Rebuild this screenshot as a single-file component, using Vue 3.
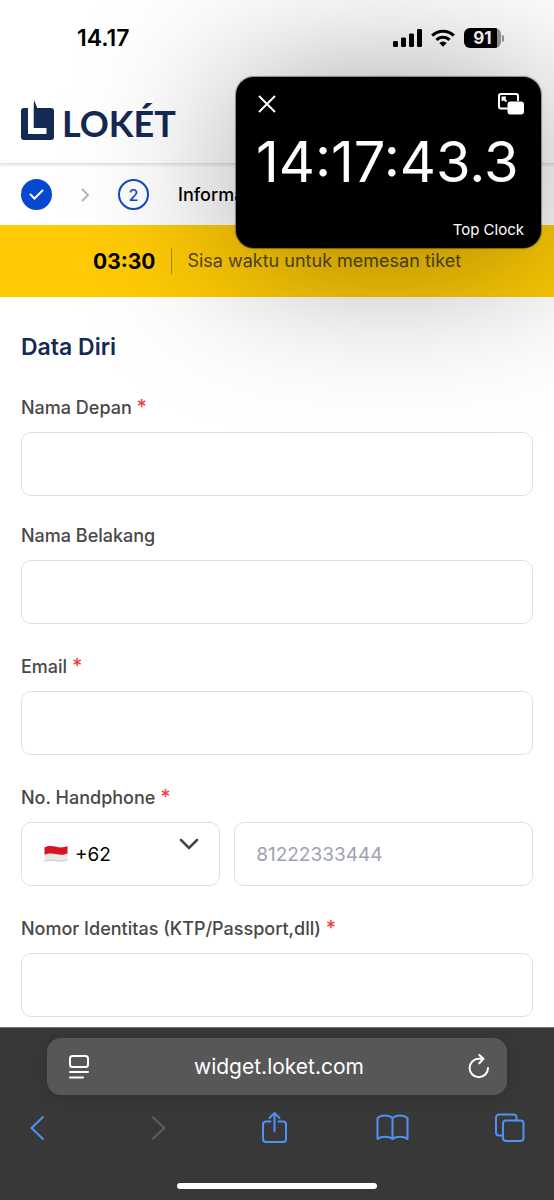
<script setup>
import { reactive } from 'vue'

const form = reactive({
  firstName: '',
  lastName: '',
  email: '',
  dialCode: '+62',
  phone: '',
  identity: ''
})
</script>

<template>
  <div class="screen">
    <div class="status">
      <time class="status-time">14.17</time>
      <div class="status-icons">
        <svg width="29" height="18" viewBox="0 0 29 18" aria-hidden="true">
          <rect x="0" y="12" width="5" height="6" rx="1.3" />
          <rect x="8" y="8.500" width="5" height="9.500" rx="1.300" />
          <rect x="16" y="4.500" width="5" height="13.500" rx="1.300" />
          <rect x="24" y="0" width="5" height="18" rx="1.300" />
        </svg>
        <svg width="26" height="18" viewBox="0 0 26 18" aria-hidden="true">
          <path d="M2.200 6.600a15.300 15.300 0 0 1 21.600 0" class="wave" />
          <path d="M6.500 11a9.200 9.200 0 0 1 13 0" class="wave" />
          <path d="M13 17.800l-3.700-3.700a5.300 5.300 0 0 1 7.400 0z" />
        </svg>
        <div class="battery"><span class="battery-level">91</span><i class="battery-cap"></i></div>
      </div>
    </div>

    <header class="brand">
      <a href="#" class="logo">
        <svg width="33" height="41" viewBox="0 0 33 41" aria-hidden="true">
          <path d="M3 8h4v26h18.500v-6H12.700V8L13 0l3.300 8H30a3 3 0 0 1 3 3v26a3 3 0 0 1-3 3H3a3 3 0 0 1-3-3V11a3 3 0 0 1 3-3z" />
        </svg>
        <span>LOKÉT</span>
      </a>
    </header>

    <nav class="steps" aria-label="Langkah">
      <span class="step done">
        <svg width="15" height="11" viewBox="0 0 15 11"><path d="M1.500 5.500l4 4 8-8" /></svg>
      </span>
      <svg class="step-arrow" width="8" height="14" viewBox="0 0 8 14"><path d="M1 1l6 6-6 6" /></svg>
      <span class="step current">2</span>
      <span class="step-name">Informasi</span>
    </nav>

    <div class="countdown">
      <strong>03:30</strong>
      <span class="countdown-text">Sisa waktu untuk memesan tiket</span>
    </div>

    <form class="form" @submit.prevent>
      <h1>Data Diri</h1>
      <div class="field required">
        <label for="first-name">Nama Depan <b>*</b></label>
        <input id="first-name" v-model="form.firstName" type="text" />
      </div>
      <div class="field">
        <label for="last-name">Nama Belakang</label>
        <input id="last-name" v-model="form.lastName" type="text" />
      </div>
      <div class="field required">
        <label for="email">Email <b>*</b></label>
        <input id="email" v-model="form.email" type="email" />
      </div>
      <div class="field required">
        <label for="phone">No. Handphone <b>*</b></label>
        <div class="phone">
          <div class="dial">
            <select v-model="form.dialCode" aria-label="Kode negara">
              <option value="+62">+62</option>
            </select>
            <svg class="flag" width="24" height="18" viewBox="0 0 24 18" aria-hidden="true">
              <path d="M0.500 2.500C4.500 0.500 8 1 12 1.800s7.500 1 11.500-.8V15c-4 1.800-7.500 1.500-11.500.8S4.500 14.800.500 16.800z" fill="#e9e9e9" />
              <path d="M0.500 2.500C4.500 0.500 8 1 12 1.800s7.500 1 11.500-.8v7.400c-4 1.700-7.500 1.400-11.500.7S4.500 8 .500 9.800z" fill="#d8151c" />
              <path d="M0.500 16.500c4-2 7.500-1.600 11.500-.9s7.500 1 11.500-.8" fill="none" stroke="#bcbcbc" stroke-width=".8" />
            </svg>
            <svg class="dial-arrow" width="20" height="12" viewBox="0 0 20 12" aria-hidden="true">
              <path d="M2 2l8 8 8-8" />
            </svg>
          </div>
          <input id="phone" v-model="form.phone" type="tel" placeholder="81222333444" />
        </div>
      </div>
      <div class="field required">
        <label for="identity">Nomor Identitas (KTP/Passport,dll) <b>*</b></label>
        <input id="identity" v-model="form.identity" type="text" />
      </div>
    </form>

    <footer class="browser">
      <div class="address">
        <button type="button" aria-label="Menu halaman">
          <svg width="22" height="26" viewBox="0 0 22 26">
            <rect x="2" y="2" width="18" height="11" rx="2.500" />
            <path d="M2 18h18M2 23.500h13" />
          </svg>
        </button>
        <span class="url">widget.loket.com</span>
        <button type="button" aria-label="Muat ulang">
          <svg width="22" height="26" viewBox="0 0 22 26">
            <path d="M20 14a9.200 9.200 0 1 1-9.200-9.200h4.700M11.300 1l4.200 3.800-4.200 4.400" />
          </svg>
        </button>
      </div>
      <div class="toolbar">
        <button type="button" aria-label="Kembali">
          <svg width="34" height="34" viewBox="0 0 34 34"><path d="M23 6L11.500 17 23 28" /></svg>
        </button>
        <button type="button" aria-label="Maju" disabled>
          <svg width="34" height="34" viewBox="0 0 34 34"><path d="M14.500 6L26.500 17 14.500 28" /></svg>
        </button>
        <button type="button" aria-label="Bagikan">
          <svg width="34" height="34" viewBox="0 0 34 34">
            <path d="M13.500 10.500H9A3 3 0 0 0 6 13.500V28a3 3 0 0 0 3 3h17a3 3 0 0 0 3-3V13.500a3 3 0 0 0-3-3h-4.500M17.500 20.500V2M12.500 7l5-5 5 5" />
          </svg>
        </button>
        <button type="button" aria-label="Bookmark">
          <svg width="34" height="34" viewBox="0 0 34 34">
            <path d="M17.500 7C14 3.500 6 3.500 2.500 7v21c3.500-3 11.500-3 15 0 3.500-3 11.500-3 15 0V7C29 3.500 21 3.500 17.500 7v21" />
          </svg>
        </button>
        <button type="button" aria-label="Tab">
          <svg width="34" height="34" viewBox="0 0 34 34">
            <path d="M9.500 24.500H6a3 3 0 0 1-3-3V6.500a3 3 0 0 1 3-3h14.500a3 3 0 0 1 3 3v3" />
            <rect x="10" y="9.500" width="20.500" height="20.500" rx="3" />
          </svg>
        </button>
      </div>
      <div class="home-bar"></div>
    </footer>

    <aside class="pip">
      <div class="pip-card">
        <div class="pip-top">
          <button type="button" aria-label="Tutup">
            <svg width="18" height="18" viewBox="0 0 18 18"><path d="M1 1l16 16m0-16L1 17" /></svg>
          </button>
          <button type="button" aria-label="Kembali ke aplikasi">
            <svg width="26" height="22" viewBox="0 0 26 22">
              <path d="M10 15.500H3a2 2 0 0 1-2-2V3a2 2 0 0 1 2-2h15a2 2 0 0 1 2 2v5" />
              <path d="M8.500 8.500L4.800 4.800M4.500 8V4.500H8" />
              <rect x="10.500" y="9.500" width="14.500" height="11" rx="2" fill="#fff" />
            </svg>
          </button>
        </div>
        <div class="pip-time">14:17:43.3</div>
        <div class="pip-name">Top Clock</div>
      </div>
    </aside>
  </div>
</template>

<style>
body {
  margin: 0;
  background: #fff;
}
</style>

<style scoped>
.screen {
  position: relative;
  display: flex;
  flex-direction: column;
  min-height: 100vh;
  overflow: hidden;
  background: #fff;
  font-family: Inter, "Liberation Sans", sans-serif;
  color: #000;
}
.screen * {
  box-sizing: border-box;
}
button {
  display: flex;
  padding: 0;
  border: 0;
  background: none;
  color: inherit;
}
svg {
  display: block;
  flex: none;
}

.status {
  display: flex;
  justify-content: space-between;
  align-items: center;
  height: 76px;
  padding: 0 50px 0 77px;
}
.status-time {
  font-size: 23px;
  font-weight: 600;
}
.status-icons {
  display: flex;
  align-items: center;
  gap: 8px;
}
.wave {
  fill: none;
  stroke: #000;
  stroke-width: 3;
}
.battery {
  display: flex;
  align-items: center;
  gap: 1px;
}
.battery-level {
  width: 37px;
  border-radius: 6px;
  background: linear-gradient(90deg, #000 90%, #999 90%);
  color: #fff;
  font-size: 17px;
  font-weight: 700;
  line-height: 20px;
  text-align: center;
}
.battery-cap {
  width: 2px;
  height: 7px;
  border-radius: 0 2px 2px 0;
  background: #999;
}

.brand {
  display: flex;
  align-items: center;
  height: 88px;
  padding: 2px 21px 0;
  border-bottom: 1px solid #e2e2e2;
  box-shadow: 0 2px 2px rgba(0, 0, 0, 0.08);
}
.logo {
  display: flex;
  align-items: flex-end;
  gap: 8px;
  color: #152955;
  font-family: Lato, sans-serif;
  font-size: 36px;
  font-weight: 700;
  line-height: 36px;
  text-decoration: none;
}
.logo svg {
  fill: #152955;
}

.steps {
  display: flex;
  align-items: center;
  gap: 29px;
  height: 61px;
  padding: 0 21px;
}
.step {
  display: flex;
  align-items: center;
  justify-content: center;
  width: 31px;
  height: 31px;
  border: 2px solid #0b49c9;
  border-radius: 50%;
  color: #0b49c9;
  font-size: 16px;
  font-weight: 500;
}
.done {
  background: #0548d2;
}
.done path {
  fill: none;
  stroke: #fff;
  stroke-width: 2;
  stroke-linecap: round;
}
.step-arrow path {
  fill: none;
  stroke: #b0b4bf;
  stroke-width: 2;
}
.step-name {
  font-size: 18px;
  font-weight: 500;
}

.countdown {
  display: flex;
  align-items: center;
  justify-content: center;
  gap: 16px;
  height: 72px;
  background: #ffcb05;
}
.countdown strong {
  font-size: 21px;
  font-weight: 700;
}
.countdown-text {
  padding-left: 15px;
  border-left: 1px solid #a08a20;
  color: #57491a;
  font-size: 18px;
  line-height: 26px;
}

.form {
  flex: 1;
  padding: 36px 21px 9px;
}
h1 {
  margin: 0 0 7px;
  color: #152955;
  font-size: 23px;
  font-weight: 600;
  line-height: 28px;
}
.field {
  padding-top: 28px;
}
.required {
  padding-top: 31px;
}
h1 + .field {
  padding-top: 28px;
}
label {
  display: block;
  margin-bottom: 12px;
  color: #484848;
  font-size: 18px;
  font-weight: 500;
  line-height: 24px;
}
label b {
  color: #ef3e42;
  font-size: 20px;
  font-weight: 500;
  line-height: 20px;
}
input,
select {
  display: block;
  width: 100%;
  height: 64px;
  margin: 0;
  padding: 0 21px;
  border: 1px solid #dcdfe6;
  border-radius: 10px;
  background: #fff;
  color: #000;
  font: inherit;
  font-size: 19px;
}
input::placeholder {
  color: #9ca3af;
  opacity: 1;
}
select {
  padding-left: 53px;
  appearance: none;
}
.phone {
  display: grid;
  grid-template-columns: 2fr 3fr;
  gap: 14px;
}
.dial {
  position: relative;
}
.flag {
  position: absolute;
  top: 23px;
  left: 23px;
}
.dial-arrow {
  position: absolute;
  top: 16px;
  right: 21px;
  fill: none;
  stroke: #444;
  stroke-width: 2.500;
  stroke-linecap: round;
}

.browser {
  padding: 10px 0 11px;
  border-top: 1px solid #777;
  background: #383838;
}
.address {
  display: flex;
  align-items: center;
  justify-content: space-between;
  height: 57px;
  margin: 0 47px;
  padding: 0 17px 0 21px;
  border-radius: 14px;
  background: #575757;
  box-shadow: 0 2px 16px rgba(0, 0, 0, 0.15);
  color: #fff;
}
.url {
  font-size: 21px;
}
.browser svg {
  fill: none;
  stroke: currentColor;
  stroke-width: 2;
  stroke-linecap: round;
  stroke-linejoin: round;
}
.toolbar {
  display: flex;
  justify-content: space-between;
  margin: 16px 27px 38px 20px;
  color: #4e92f5;
}
.toolbar button:disabled {
  color: #5b5b5b;
}
.home-bar {
  width: 36%;
  height: 6px;
  margin: 0 auto;
  border-radius: 3px;
  background: #fff;
}

.pip {
  position: absolute;
  top: 77px;
  right: 13px;
  z-index: 1;
  width: 305px;
  color: #fff;
}
/* Soft ambient shadow cast by the floating clock */
.pip::before {
  content: "";
  position: absolute;
  inset: 10px 0 -10px;
  z-index: -1;
  background: rgba(0, 0, 0, 0.42);
  filter: blur(80px);
  pointer-events: none;
}
.pip-card {
  display: flex;
  flex-direction: column;
  height: 171px;
  padding: 16px 17px 7px 20px;
  border-radius: 18px;
  background: #000;
  box-shadow: 0 0 1px 1px rgba(0, 0, 0, 0.4);
}
.pip-top {
  display: flex;
  align-items: center;
  justify-content: space-between;
}
.pip-top button:first-child {
  margin-left: 2px;
}
.pip-top svg {
  fill: none;
  stroke: #fff;
  stroke-width: 2;
}
.pip-time {
  margin: 17px 0;
  font-size: 56px;
  font-weight: 400;
  line-height: 60px;
  white-space: nowrap;
}
.pip-name {
  margin-top: auto;
  font-size: 15px;
  line-height: 22px;
  text-align: right;
}
</style>
